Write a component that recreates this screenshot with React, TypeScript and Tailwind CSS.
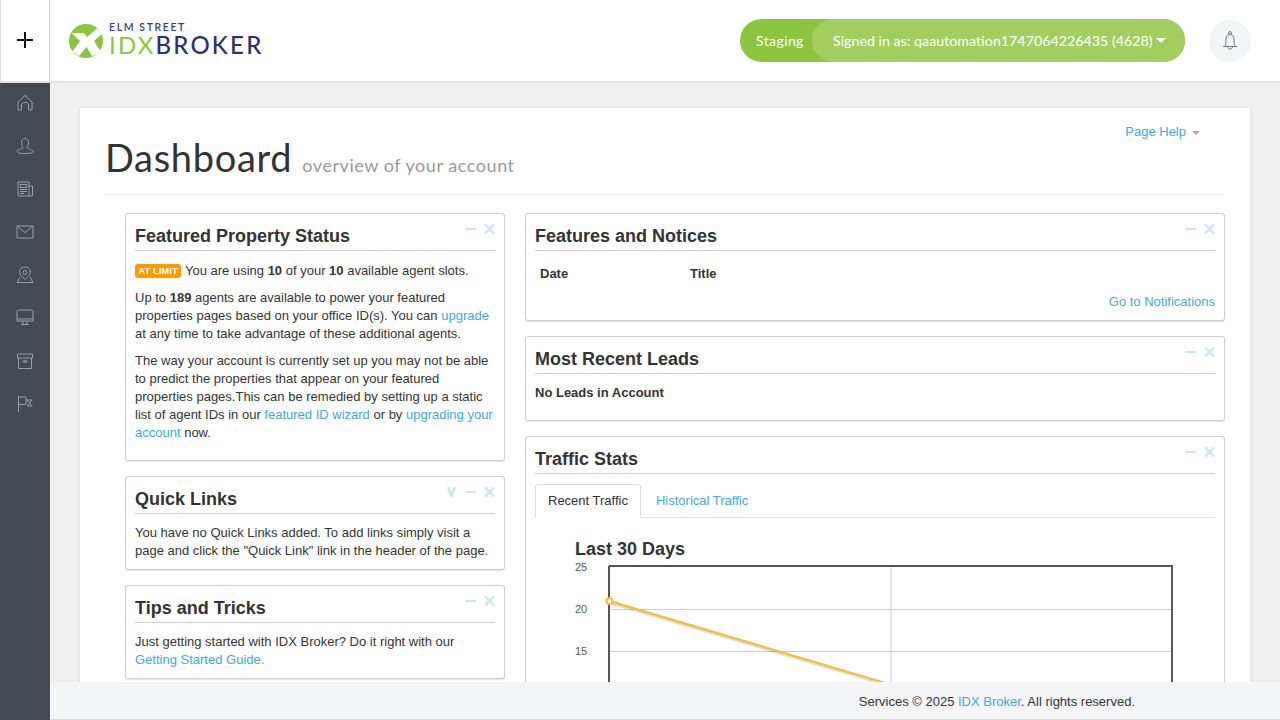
import React from 'react';

const Panel = ({ title, children, extra, className = '' }: { title: string; children: React.ReactNode; extra?: boolean; className?: string }) => (
    <div className={`relative bg-white border border-[#ccc] rounded-[3px] px-[9px] pt-[9px] shadow-[0_1px_1px_rgba(0,0,0,0.1)] ${className}`}>
        <div className="absolute right-[9px] top-[10px] flex items-center text-[#c9e6f5]">
            {extra && (
                <svg width="9" height="10" viewBox="0 0 9 10" fill="none" stroke="currentColor" strokeWidth="2.4" className="mr-[9px]"><path d="M1 0 L4.5 9 L8 0" /></svg>
            )}
            <svg width="11" height="10" viewBox="0 0 11 10" fill="none" stroke="currentColor" strokeWidth="2" className="mr-[8px]"><path d="M0 5 H11" /></svg>
            <svg width="11" height="10" viewBox="0 0 11 10" fill="none" stroke="currentColor" strokeWidth="2.4"><path d="M1 0.5 L10 9.5 M10 0.5 L1 9.5" /></svg>
        </div>
        <h2 className="text-[18px] leading-[27px] font-bold text-[#333] border-b border-[#ccc] pb-0">{title}</h2>
        {children}
    </div>
);

const A = ({ children }: { children: React.ReactNode }) => <a className="text-[#3ea8e0]">{children}</a>;

const navIcons = [
    <path key="home" d="M2 16 V8 L9 1.5 L16 8 V16 H12.5 V11 C12.5 7.5 5.5 7.5 5.5 11 V16 Z" />,
    <path key="user" d="M9 1.5 C6.5 1.5 5.5 3.5 5.5 5.5 C5.5 8 6.5 9.5 7.5 10.5 C6 12 1 12.5 1 14.5 C1 16 4 16.5 9 16.5 C14 16.5 17 16 17 14.5 C17 12.5 12 12 10.5 10.5 C11.5 9.5 12.5 8 12.5 5.5 C12.5 3.5 11.5 1.5 9 1.5 Z" />,
    <g key="news"><path d="M2 2 H13 V16 H3 C2.4 16 2 15.6 2 15 Z M13 6 H16.5 V15 C16.5 15.6 16 16 15.5 16 H13" /><path d="M4 4.5 H11 V7.5 H4 Z M4 9.5 H11 M4 11.5 H11 M4 13.5 H8" /></g>,
    <path key="mail" d="M1 3 H17 V15 H1 Z M1 3 L9 9.5 L17 3" />,
    <g key="pin"><path d="M9 13.5 L4.5 9 C2 5.5 4.5 1 9 1 C13.5 1 16 5.5 13.5 9 Z" /><circle cx="9" cy="6.5" r="2" /><path d="M4 11 L1 16.5 H17 L14 11" /></g>,
    <g key="screen"><path d="M2.5 1 H15.5 C16.3 1 17 1.7 17 2.5 V12 H1 V2.5 C1 1.7 1.7 1 2.5 1 Z M1 10 H17" /><path d="M7 12 V15.5 H11 V12 M5 15.5 H13" /></g>,
    <g key="box"><path d="M1.5 2 H16.5 V6 H1.5 Z M2.5 6 V16.5 H15.5 V6" /><ellipse cx="9" cy="9.5" rx="2.5" ry="0.8" /></g>,
    <g key="flag"><path d="M2.5 0.5 V17 M2.5 2 H10 V9.5 H2.5" /><path d="M11 5 H16 L13.5 8 L16 11 H11 L13.5 8 Z" /></g>,
];

const App = () => {
    return (
        <div className="h-[720px] w-[1280px] relative overflow-hidden flex flex-col bg-[#f0f0f0] text-[13px] leading-[18px] text-[#333] font-['Liberation_Sans',Arial,sans-serif]">
            <header className="h-[83px] shrink-0 flex items-center bg-white border-b-2 border-[#e3e3e3]">
                <div className="w-[50px] h-[81px] shrink-0 flex items-center justify-center pb-[1px] border-x border-[#ccc] border-l-[#ddd]">
                    <svg width="18" height="18" viewBox="0 0 18 18" stroke="#111" strokeWidth="2"><path d="M9 1 V17 M1 9 H17" /></svg>
                </div>
                <div className="ml-[19px] flex items-center">
                    <svg width="34" height="34" viewBox="0 0 34 34" className="shrink-0">
                        <circle cx="17" cy="17" r="17" fill="#8cc63f" />
                        <path d="M2.5 9 L15 9 L18 13 L28 4.5 L33 10 L25 17 L32 28 L23 32 L17.5 23 L10 32 L3.5 27.5 L11 17 Z" fill="#fff" />
                    </svg>
                    <div className="ml-[6px] font-['Lato',sans-serif] mt-[-2px]">
                        <div className="text-[10.5px] leading-[11px] font-semibold tracking-[1.6px] text-[#3a3d73]">ELM STREET</div>
                        <div className="text-[24px] leading-[24px] tracking-[2.2px] whitespace-nowrap">
                            <span className="text-[#8cc63f]">IDX</span><span className="text-[#2f3168] font-medium">BROKER</span>
                        </div>
                    </div>
                </div>
                <div className="ml-auto flex items-center">
                    <div className="h-[43px] w-[445px] rounded-full bg-[#8cc63f] flex items-center text-white font-['Lato',sans-serif] text-[14px]">
                        <span className="pl-[16px] w-[72px] shrink-0 tracking-[0.4px]">Staging</span>
                        <div className="h-[43px] flex-1 rounded-full bg-[#a0cf5f] flex items-center pl-[21px] whitespace-nowrap text-[14.25px]">
                            Signed in as: qaautomation1747064226435 (4628)
                            <span className="ml-[3px] w-0 h-0 border-x-[5px] border-x-transparent border-t-[5px] border-t-white" />
                        </div>
                    </div>
                    <div className="ml-[24px] mr-[29px] w-[42px] h-[42px] rounded-full bg-[#f3f4f6] flex items-center justify-center">
                        <svg width="16" height="20" viewBox="0 0 16 20" fill="none" stroke="#777" strokeWidth="1"><circle cx="8" cy="2" r="1.5" /><path d="M3 15.5 C4 13 4 10.5 4 8 C4 5 6 3.5 8 3.5 C10 3.5 12 5 12 8 C12 10.5 12 13 13 15.5 M1 15.5 H15 M5.5 15.5 C5.5 19 10.5 19 10.5 15.5" /></svg>
                    </div>
                </div>
            </header>

            <div className="flex-1 flex min-h-0">
                <nav className="w-[50px] shrink-0 bg-[#434a54] flex flex-col items-center pt-[11px] gap-[25px]">
                    {navIcons.map((icon, i) => (
                        <svg key={i} width="18" height="18" viewBox="0 0 18 18" fill="none" stroke="#98a0a8" strokeWidth="1">{icon}</svg>
                    ))}
                </nav>

                <main className="flex-1 min-w-0 pl-[30px] pr-[30px] pt-[25px]">
                    <div className="bg-white min-h-[700px] px-[25px] relative shadow-[0_0_4px_rgba(0,0,0,0.1)]">
                        <a className="absolute right-[50px] top-[15px] text-[#3ea8e0] flex items-center">
                            Page Help
                            <span className="ml-[6px] mt-[1px] w-0 h-0 border-x-[4px] border-x-transparent border-t-[4px] border-t-[#aaa]" />
                        </a>
                        <div className="pt-[27px] pb-[15px] border-b border-[#eee] flex items-baseline font-['Lato',sans-serif] mr-[1px]">
                            <h1 className="text-[38px] leading-[44px] font-normal text-[#333] tracking-[0.7px]">Dashboard</h1>
                            <span className="ml-[10px] text-[18px] text-[#999] tracking-[0.55px]">overview of your account</span>
                        </div>

                        <div className="flex gap-[20px] pl-[20px] pt-[18px]">
                            <div className="w-[380px] shrink-0 flex flex-col gap-[15px]">
                                <Panel title="Featured Property Status">
                                    <div className="pt-[11px] pb-[18px] flex flex-col gap-[9px]">
                                        <p>
                                            <span className="inline-block align-[1px] h-[14px] w-[46px] text-center mr-[4px] rounded-[3px] bg-[#f90] text-white text-[9.5px] leading-[14px] font-bold">AT LIMIT</span>
                                            You are using <b>10</b> of your <b>10</b> available agent slots.
                                        </p>
                                        <p>Up to <b>189</b> agents are available to power your featured properties pages based on your office ID(s). You can <A>upgrade</A> at any time to take advantage of these additional agents.</p>
                                        <p>The way your account is currently set up you may not be able to predict the properties that appear on your featured properties pages.This can be remedied by setting up a static list of agent IDs in our <A>featured ID wizard</A> or by <A>upgrading your account</A> now.</p>
                                    </div>
                                </Panel>
                                <Panel title="Quick Links" extra>
                                    <p className="pt-[10px] pb-[9px]">You have no Quick Links added. To add links simply visit a page and click the "Quick Link" link in the header of the page.</p>
                                </Panel>
                                <Panel title="Tips and Tricks">
                                    <p className="pt-[10px] pb-[9px]">Just getting started with IDX Broker? Do it right with our <A>Getting Started Guide.</A></p>
                                </Panel>
                            </div>

                            <div className="w-[700px] shrink-0 flex flex-col gap-[15px]">
                                <Panel title="Features and Notices">
                                    <div className="flex font-bold pt-[14px] pl-[5px]">
                                        <span className="w-[150px]">Date</span>
                                        <span>Title</span>
                                    </div>
                                    <div className="text-right pt-[10px] pb-[9px]"><A>Go to Notifications</A></div>
                                </Panel>
                                <Panel title="Most Recent Leads">
                                    <p className="font-bold pt-[10px] pb-[18px]">No Leads in Account</p>
                                </Panel>
                                <Panel title="Traffic Stats">
                                    <div className="flex border-b border-[#ddd] mt-[10px] h-[34px]">
                                        <div className="h-[34px] px-[12px] bg-white border border-[#ddd] border-b-white rounded-t-[3px] leading-[32px]">Recent Traffic</div>
                                        <div className="px-[15px] leading-[33px]"><A>Historical Traffic</A></div>
                                    </div>
                                    <div className="pl-[40px] pt-[21px]">
                                        <h3 className="text-[18px] leading-[20px] font-bold">Last 30 Days</h3>
                                        <svg width="620" height="220" className="-ml-[2px] font-['Liberation_Sans',sans-serif]">
                                            <g fontSize="11" fill="#555">
                                                <text x="2" y="12">25</text>
                                                <text x="2" y="54">20</text>
                                                <text x="2" y="96">15</text>
                                            </g>
                                            <path d="M36 50.5 H599 M36 92.5 H599 M318 7 V220" stroke="#ccc" fill="none" />
                                            <path d="M36 7 H599 V220 M36 7 V220" stroke="#555" strokeWidth="2" fill="none" />
                                            <path d="M36 42 L320 126.3" stroke="#000" strokeOpacity="0.12" strokeWidth="3" transform="translate(0 1.5)" fill="none" />
                                            <path d="M36 42 L320 126.3" stroke="#edc240" strokeWidth="2.4" fill="none" />
                                            <circle cx="36.5" cy="42" r="3" fill="#fff" stroke="#edc240" strokeWidth="2" />
                                        </svg>
                                    </div>
                                </Panel>
                            </div>
                        </div>
                    </div>
                </main>
            </div>

            {/* sticks over the page content */}
            <footer className="absolute left-[50px] right-0 bottom-0 h-[38px] bg-[#f4f5f7] border-b border-[#ddd] flex items-center justify-end pr-[145px] pt-[2px]">
                <span>Services © 2025 <A>IDX Broker</A>. All rights reserved.</span>
            </footer>
        </div>
    );
};

export default App;
